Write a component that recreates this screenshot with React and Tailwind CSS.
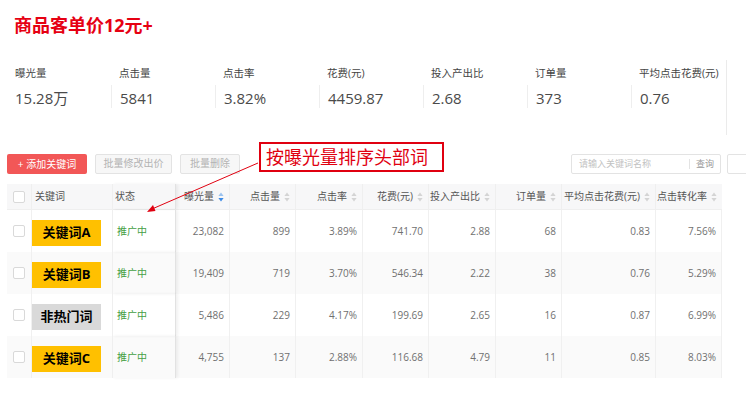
import React from 'react';

const stats = [
  { label: '曝光量', value: '15.28万' },
  { label: '点击量', value: '5841' },
  { label: '点击率', value: '3.82%' },
  { label: '花费(元)', value: '4459.87' },
  { label: '投入产出比', value: '2.68' },
  { label: '订单量', value: '373' },
  { label: '平均点击花费(元)', value: '0.76' },
];

const cols = [
  { title: '曝光量', w: 'w-[54px]', active: true },
  { title: '点击量', w: 'w-[66px]' },
  { title: '点击率', w: 'w-[67px]' },
  { title: '花费(元)', w: 'w-[66px]' },
  { title: '投入产出比', w: 'w-[67px]' },
  { title: '订单量', w: 'w-[66px]' },
  { title: '平均点击花费(元)', w: 'w-[94px]' },
  { title: '点击转化率', w: 'w-[66px]' },
];

const rows = [
  { kw: '关键词A', hot: true, v: ['23,082', '899', '3.89%', '741.70', '2.88', '68', '0.83', '7.56%'] },
  { kw: '关键词B', hot: true, v: ['19,409', '719', '3.70%', '546.34', '2.22', '38', '0.76', '5.29%'] },
  { kw: '非热门词', hot: false, v: ['5,486', '229', '4.17%', '199.69', '2.65', '16', '0.87', '6.99%'] },
  { kw: '关键词C', hot: true, v: ['4,755', '137', '2.88%', '116.68', '4.79', '11', '0.85', '8.03%'] },
];

function SortIcon({ active }) {
  return (
    <svg width="6" height="10" viewBox="0 0 6 10" className="ml-[4px] shrink-0">
      <path d="M3 0.5 L5.6 4 H0.4 Z" fill={active ? '#9cc3ef' : '#d4d4d4'} />
      <path d="M3 9.5 L5.6 6 H0.4 Z" fill={active ? '#3d8be6' : '#d4d4d4'} />
    </svg>
  );
}

function Checkbox() {
  return <div className="w-[12px] h-[12px] border border-[#d9d9d9] rounded-[2px] bg-white" />;
}

export default function App() {
  return (
    <div
      className="relative w-[746px] h-[415px] bg-white overflow-hidden text-[#333]"
      style={{ fontFamily: '"Open Sans", "Noto Sans CJK SC", sans-serif' }}
    >
      {/* title */}
      <div className="pt-[13px] pl-[14px] text-[18px] leading-[24px] font-bold text-[#e60012]">
        商品客单价12元+
      </div>

      {/* overview stats */}
      <div className="ml-[7px] mt-[23px] w-[720px] pt-[6px] pb-[27px] flex overflow-hidden border-r border-[#ebebeb]">
        {stats.map((s, i) => (
          <div key={s.label} className={`w-[104px] shrink-0 ${i === 0 ? 'pl-[8px]' : ''}`}>
            <div className={`text-[10.5px] leading-[14px] text-[#444] ${i === 0 ? '' : 'pl-[8px]'}`}>{s.label}</div>
            <div
              className={`mt-[5px] h-[23px] pt-[3px] text-[15px] leading-[20px] text-[#4a4a4a] ${
                i === 0 ? '' : 'pl-[8px] border-l border-[#eeeeee]'
              }`}
            >
              {s.value}
            </div>
          </div>
        ))}
      </div>

      {/* toolbar */}
      <div className="mt-[18px] pl-[7px] flex items-center h-[21px]">
        <button className="w-[80px] h-[20px] rounded-[2px] bg-[#f25757] text-white text-[10px] leading-[20px] shrink-0">
          + 添加关键词
        </button>
        <button className="ml-[8px] w-[77px] h-[20px] rounded-[2px] bg-[#f7f7f7] border border-[#e3e3e3] text-[#b3b3b3] text-[10px] shrink-0">
          批量修改出价
        </button>
        <button className="ml-[8px] w-[60px] h-[20px] rounded-[2px] bg-[#f7f7f7] border border-[#e3e3e3] text-[#b3b3b3] text-[10px] shrink-0">
          批量删除
        </button>
        <div className="ml-[331px] w-[150px] h-[20px] shrink-0 border border-[#e3e3e3] rounded-[2px] flex items-center text-[9px]">
          <span className="pl-[7px] text-[#c2c2c2] flex-1">请输入关键词名称</span>
          <span className="h-[10px] border-l border-[#e3e3e3]" />
          <span className="px-[6px] text-[#9a9a9a]">查询</span>
        </div>
        <div className="ml-[6px] w-[30px] h-[20px] shrink-0 border border-[#e3e3e3] rounded-[2px]" />
      </div>

      {/* table */}
      <div className="mt-[10px] ml-[7px] w-[715px] text-[10px]">
        <div className="flex h-[26px] bg-[#f7f7f8] text-[#555] border-b border-[#efefef]">
          <div className="w-[25px] flex items-center justify-center border-r border-[#efefef]">
            <Checkbox />
          </div>
          <div className="w-[80px] flex items-center pl-[3px]">关键词</div>
          <div className="w-[64px] flex items-center pl-[2px] border-l border-[#efefef] border-r border-r-[#e2e2e2] shadow-[2px_0_3px_rgba(0,0,0,0.06)]">状态</div>
          {cols.map((c) => (
            <div key={c.title} className={`${c.w} flex items-center justify-end pr-[5px] border-r border-[#efefef] last:border-r-0`}>
              {c.title}
              <SortIcon active={c.active} />
            </div>
          ))}
        </div>
        {rows.map((r, idx) => (
          <div key={r.kw} className={`flex h-[42px] ${idx % 2 === 1 ? 'bg-[#fafafa]' : 'bg-white'}`}>
            <div className="w-[25px] flex items-center justify-center border-r border-[#f0f0f0]">
              <Checkbox />
            </div>
            <div className="w-[80px] flex items-center">
              <div
                className={`mt-[3px] w-[69px] h-[26px] flex items-center justify-center text-[13px] font-bold text-black ${
                  r.hot ? 'bg-[#ffc000]' : 'bg-[#d9d9d9]'
                }`}
              >
                {r.kw}
              </div>
            </div>
            <div className="w-[64px] flex items-center pl-[4px] text-[#45a045] border-l border-[#efefef] border-r border-r-[#e2e2e2] shadow-[2px_0_3px_rgba(0,0,0,0.06)]">
              推广中
            </div>
            {r.v.map((v, i) => (
              <div
                key={i}
                className={`${cols[i].w} flex items-center justify-end pr-[5px] text-[#707070] border-r border-[#f0f0f0]`}
              >
                {v}
              </div>
            ))}
          </div>
        ))}
      </div>

      {/* annotation */}
      <div className="absolute left-[259px] top-[142px] w-[185px] h-[30px] border-2 border-[#e00010] bg-white flex items-center pl-[5px] text-[18px] leading-[22px] text-[#e00010]">
        按曝光量排序头部词
      </div>
      <svg className="absolute left-0 top-0" width="746" height="415" style={{ pointerEvents: 'none' }}>
        <line x1="258" y1="163" x2="152" y2="209" stroke="#e00010" strokeWidth="1" />
        <path d="M147 212 L153 205 L155.5 211 Z" fill="#e00010" />
      </svg>
    </div>
  );
}
